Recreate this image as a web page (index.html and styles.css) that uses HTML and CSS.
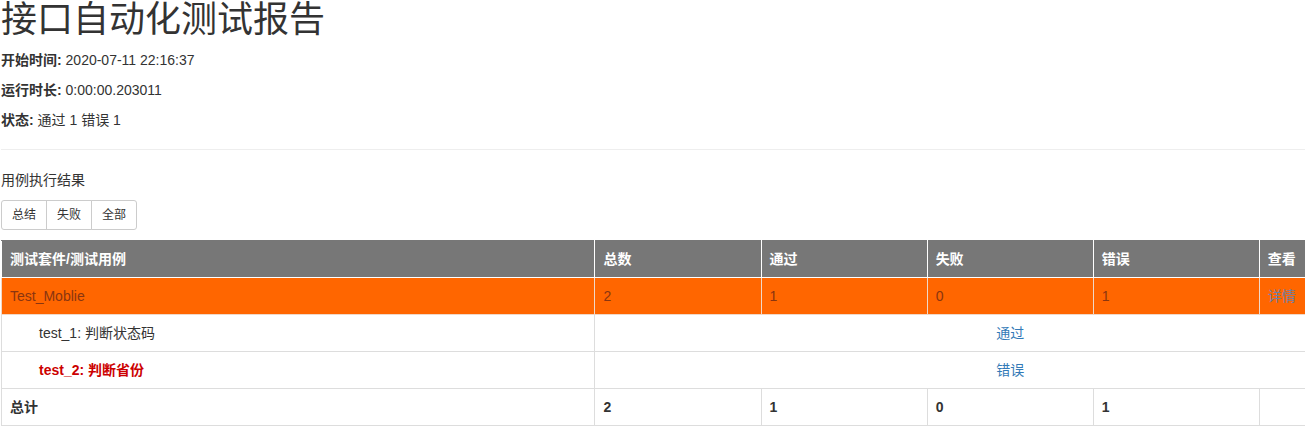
FILE: index.html
```html
<!DOCTYPE html>
<html lang="zh-CN">
<head>
  <meta charset="UTF-8" />
  <title>接口自动化测试报告</title>
  <link rel="stylesheet" href="styles.css">
</head>
<body>
  <div class="container">
    <h1>接口自动化测试报告</h1>
    <p><strong>开始时间:</strong> 2020-07-11 22:16:37</p>
    <p><strong>运行时长:</strong> 0:00:00.203011</p>
    <p><strong>状态:</strong> 通过 1 错误 1</p>

    <hr>

    <p class="resultado">用例执行结果</p>
    <div class="btn-group">
      <button class="btn">总结</button>
      <button class="btn">失败</button>
      <button class="btn">全部</button>
    </div>

    <div class="table-wrap">
      <table class="result-table">
        <colgroup>
          <col class="col-name">
          <col class="col-num">
          <col class="col-num">
          <col class="col-num">
          <col class="col-num">
          <col class="col-num">
        </colgroup>
        <thead>
          <tr>
            <th>测试套件/测试用例</th>
            <th>总数</th>
            <th>通过</th>
            <th>失败</th>
            <th>错误</th>
            <th>查看</th>
          </tr>
        </thead>
        <tbody>
          <tr class="suite-error">
            <td>Test_Moblie</td>
            <td>2</td>
            <td>1</td>
            <td>0</td>
            <td>1</td>
            <td><a href="#">详情</a></td>
          </tr>
          <tr class="case-pass">
            <td class="case-name">test_1: 判断状态码</td>
            <td colspan="5" class="case-status"><a href="#">通过</a></td>
          </tr>
          <tr class="case-error">
            <td class="case-name">test_2: 判断省份</td>
            <td colspan="5" class="case-status"><a href="#">错误</a></td>
          </tr>
          <tr class="total-row">
            <td>总计</td>
            <td>2</td>
            <td>1</td>
            <td>0</td>
            <td>1</td>
            <td></td>
          </tr>
        </tbody>
      </table>
    </div>
  </div>
</body>
</html>
```

FILE: styles.css
```css
html, body {
  overflow: hidden;
}

body {
  margin: 0;
  font-family: "Liberation Sans", "Noto Sans CJK SC", sans-serif;
  font-size: 14px;
  line-height: 20px;
  color: #333;
  background: #fff;
}

.container {
  padding: 0 0 0 1px;
}

h1 {
  margin: 0 0 10px;
  font-size: 36px;
  font-weight: 400;
  line-height: 40px;
  color: #333;
}

p {
  margin: 0 0 10px;
}

hr {
  margin: 19px 0 20px;
  border: 0;
  border-top: 1px solid #eee;
}

.resultado {
  margin-bottom: 10px;
}

/* Botões */
.btn-group {
  display: flex;
  margin-bottom: 10px;
}

.btn {
  font-family: inherit;
  font-size: 12px;
  line-height: 18px;
  padding: 5px 10px;
  background: #fff;
  color: #333;
  border: 1px solid #ccc;
  margin-left: -1px;
}

.btn:first-child {
  margin-left: 0;
  border-radius: 3px 0 0 3px;
}

.btn:last-child {
  border-radius: 0 3px 3px 0;
}

/* Tabela */
.table-wrap {
  width: 100%;
  overflow: hidden;
}

.result-table {
  width: 1425px;
  border-collapse: collapse;
  table-layout: fixed;
}

.col-name { width: 593px; }
.col-num { width: 166px; }

.result-table th,
.result-table td {
  padding: 8px;
  line-height: 20px;
  border: 1px solid #ddd;
  text-align: left;
  vertical-align: top;
}

.result-table th {
  background: #777;
  color: #fff;
  font-weight: bold;
  border-color: #fff;
  border-top-color: #777;
}

.suite-error td {
  background: #ff6600;
  color: #8a3510;
  border-color: #f0d8c8;
}

.suite-error a {
  color: #6c7fa6;
  text-decoration: none;
}

.case-name {
  padding-left: 37px !important;
}

.case-error .case-name {
  color: #c00;
  font-weight: bold;
}

.case-status {
  text-align: center !important;
}

.case-status a {
  color: #337ab7;
  text-decoration: none;
}

.total-row td {
  font-weight: bold;
}
```
